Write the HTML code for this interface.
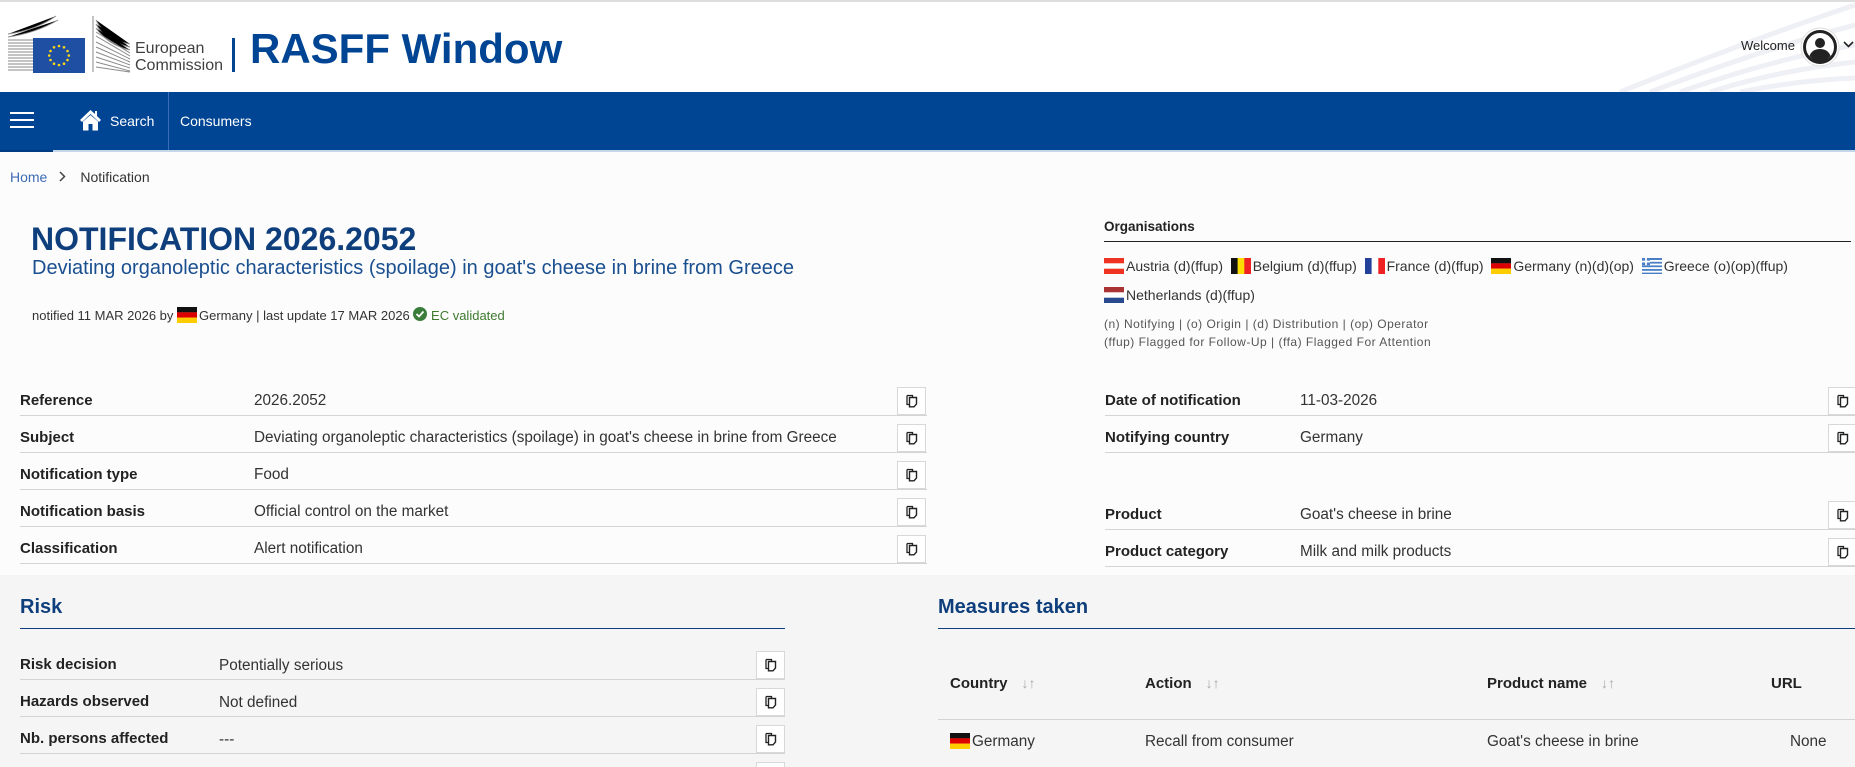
<!DOCTYPE html>
<html><head><meta charset="utf-8">
<style>
*{margin:0;padding:0;box-sizing:border-box}
html{width:1855px;height:767px;overflow:hidden}
body{width:1855px;height:767px;overflow:hidden;background:#fcfcfc;font-family:"Liberation Sans",Arial,sans-serif;color:#333;position:relative}
.a{position:absolute;white-space:nowrap}
.hdr{position:absolute;left:0;top:0;width:1855px;height:92px;background:#fff;border-top:2px solid #ddd}
.nav{position:absolute;left:0;top:92px;width:1855px;height:58px;background:#004494}
.lbl{font-weight:bold;font-size:15px;color:#222}
.val{font-size:15.3px;color:#333}
.line{position:absolute;height:1px;background:#d4d4d4}
.cp{position:absolute;width:29px;height:28px;border:1px solid #d8d8d8;background:#fff}
.cp svg{position:absolute;left:8px;top:6px}
.flag{display:inline-block;width:20px;height:16px;vertical-align:-3px;margin-right:2px}
.org{font-size:14px;color:#333}
.gray{position:absolute;left:0;top:575px;width:1855px;height:192px;background:#f5f5f5}
.th{font-weight:bold;font-size:15px;color:#222}
.sort{color:#aaa;font-size:14px;font-weight:normal;margin-left:14px}
</style></head><body>
<div class="hdr"></div>
<svg class="a" style="left:6px;top:14px" width="230" height="62" viewBox="0 0 230 62">
<g stroke="#8a8a8a" stroke-width="1">
<path d="M2 20 Q30 16 50 2"/><path d="M2 23 Q30 19 52 6"/><path d="M2 26 L28 26"/><path d="M2 29 L28 29"/><path d="M2 32 L28 32"/><path d="M2 35 L28 35"/><path d="M2 38 L28 38"/><path d="M2 41 L28 41"/><path d="M2 44 L28 44"/><path d="M2 47 L28 47"/><path d="M2 50 L28 50"/><path d="M2 53 L28 53"/><path d="M2 56 L28 56"/>
<path d="M87 2 L87 58"/><path d="M90 6 Q100 26 124 30"/><path d="M90 10 Q100 28 124 33"/><path d="M90 14 Q102 31 124 36"/><path d="M90 18 L124 39"/><path d="M90 22 L124 42"/><path d="M90 28 L124 45"/><path d="M90 33 L124 48"/><path d="M90 38 L124 51"/><path d="M90 43 L124 54"/><path d="M90 48 L124 57"/><path d="M90 53 L124 58"/>
</g>
<rect x="27" y="24" width="52" height="35" fill="#1f4fa3"/>
<g fill="#ffd617">
<circle cx="53" cy="32" r="1.3"/><circle cx="58" cy="33.3" r="1.3"/><circle cx="61.5" cy="37" r="1.3"/><circle cx="62.8" cy="41.5" r="1.3"/><circle cx="61.5" cy="46" r="1.3"/><circle cx="58" cy="49.7" r="1.3"/><circle cx="53" cy="51" r="1.3"/><circle cx="48" cy="49.7" r="1.3"/><circle cx="44.5" cy="46" r="1.3"/><circle cx="43.2" cy="41.5" r="1.3"/><circle cx="44.5" cy="37" r="1.3"/><circle cx="48" cy="33.3" r="1.3"/>
</g>
</svg>
<div class="a" style="left:135px;top:40px;font-size:16px;line-height:17px;color:#404040">European<br>Commission</div>
<div class="a" style="left:232px;top:38px;width:3px;height:34px;background:#004494"></div>
<div class="a" style="left:250px;top:24px;font-size:42px;font-weight:bold;color:#004494;line-height:50px">RASFF Window</div>
<svg class="a" style="left:1600px;top:0" width="255" height="92"><g stroke="#eef0f5" stroke-width="5" fill="none"><path d="M20 92 Q150 40 255 5"/><path d="M50 92 Q160 50 255 25"/><path d="M80 92 Q170 60 255 45"/><path d="M110 92 Q180 70 255 62"/><path d="M140 92 Q200 80 255 78"/></g></svg>
<div class="a" style="left:1741px;top:38px;font-size:13px;color:#222">Welcome</div>
<svg class="a" style="left:1800px;top:27px" width="40" height="40" viewBox="0 0 40 40"><circle cx="20" cy="20" r="19" fill="#fff" stroke="#ddd"/><circle cx="20" cy="20" r="15.5" fill="none" stroke="#222" stroke-width="3"/><circle cx="20" cy="16" r="5" fill="#222"/><path d="M9.5 29 Q12 22 20 22 Q28 22 30.5 29 Q26 34.5 20 34.5 Q14 34.5 9.5 29Z" fill="#222"/></svg>
<svg class="a" style="left:1843px;top:41px" width="11" height="8"><path d="M1 1 L5.5 5.5 L10 1" stroke="#222" stroke-width="1.6" fill="none"/></svg>

<div class="nav"></div>
<svg class="a" style="left:10px;top:112px" width="24" height="16"><g stroke="#fff" stroke-width="2"><path d="M0 1H24M0 8H24M0 15H24"/></g></svg>
<svg class="a" style="left:79px;top:109px" width="23" height="22" viewBox="0 0 23 22"><path d="M11.5 1 L1 11 L3 13 L11.5 5 L20 13 L22 11 L18 7 V2 H16 V5Z" fill="#fff"/><path d="M4 12.5 V21.5 H9.5 V15 H13.5 V21.5 H19 V12.5 L11.5 6Z" fill="#fff"/></svg>
<div class="a" style="left:110px;top:113px;font-size:14px;color:#fff">Search</div>
<div class="a" style="left:168px;top:92px;width:1px;height:58px;background:#3a6fb8"></div>
<div class="a" style="left:180px;top:113px;font-size:14px;color:#fff">Consumers</div>
<div class="a" style="left:0;top:150px;width:1855px;height:2px;background:#c5d6ea"></div>
<div class="a" style="left:0;top:150px;width:53px;height:2px;background:#003a80"></div>

<div class="a" style="left:10px;top:169px;font-size:14px"><span style="color:#3d6bb3">Home</span><svg style="margin:0 14px 0 12px;vertical-align:0px" width="7" height="11"><path d="M1 1 L5.5 5.5 L1 10" stroke="#444" stroke-width="1.5" fill="none"/></svg><span style="color:#333">Notification</span></div>

<div class="a" style="left:31px;top:221px;font-size:32px;font-weight:bold;color:#0e3f7c;line-height:36px">NOTIFICATION 2026.2052</div>
<div class="a" style="left:32px;top:256px;font-size:20px;color:#1a4f90;line-height:24px">Deviating organoleptic characteristics (spoilage) in goat's cheese in brine from Greece</div>
<div class="a" style="left:32px;top:307px;font-size:13px;color:#333">notified 11 MAR 2026 by <svg class="flag" viewBox="0 0 20 16"><rect width="20" height="5.4" fill="#111"/><rect y="5.3" width="20" height="5.4" fill="#d00"/><rect y="10.6" width="20" height="5.4" fill="#fc0"/></svg>Germany | last update 17 MAR 2026 <svg style="vertical-align:-1px" width="14" height="14"><circle cx="7" cy="7" r="7" fill="#3a7c3a"/><path d="M3.5 7 L6 9.5 L10.5 4.5" stroke="#fff" stroke-width="1.8" fill="none"/></svg> <span style="color:#3d7a2f">EC validated</span></div>

<div class="a" style="left:1104px;top:219px;font-size:13.5px;font-weight:bold;color:#222">Organisations</div>
<div class="a" style="left:1104px;top:241px;width:747px;height:1px;background:#222"></div>
<div class="a org" style="left:1104px;top:258px">
<svg class="flag" viewBox="0 0 20 16"><rect width="20" height="16" fill="#e32"/><rect y="5.3" width="20" height="5.4" fill="#fff"/></svg>Austria (d)(ffup)&nbsp;
<svg class="flag" viewBox="0 0 20 16"><rect width="7" height="16" fill="#111"/><rect x="6.6" width="7" height="16" fill="#fd0"/><rect x="13.3" width="6.7" height="16" fill="#e22"/></svg>Belgium (d)(ffup)&nbsp;
<svg class="flag" viewBox="0 0 20 16"><rect width="7" height="16" fill="#23409a"/><rect x="6.6" width="7" height="16" fill="#fff"/><rect x="13.3" width="6.7" height="16" fill="#e22"/></svg>France (d)(ffup)&nbsp;
<svg class="flag" viewBox="0 0 20 16"><rect width="20" height="5.4" fill="#111"/><rect y="5.3" width="20" height="5.4" fill="#d00"/><rect y="10.6" width="20" height="5.4" fill="#fc0"/></svg>Germany (n)(d)(op)&nbsp;
<svg class="flag" viewBox="0 0 20 16"><rect width="20" height="16" fill="#4a7fc8"/><g fill="#fff"><rect y="2" width="20" height="1.8"/><rect y="5.6" width="20" height="1.8"/><rect y="9.2" width="20" height="1.8"/><rect y="12.8" width="20" height="1.8"/></g><rect width="8" height="7.2" fill="#4a7fc8"/><rect x="3.1" width="1.8" height="7.2" fill="#fff"/><rect y="2.7" width="8" height="1.8" fill="#fff"/></svg>Greece (o)(op)(ffup)
</div>
<div class="a org" style="left:1104px;top:287px"><svg class="flag" viewBox="0 0 20 16"><rect width="20" height="16" fill="#fff"/><rect width="20" height="5.3" fill="#a33"/><rect y="10.7" width="20" height="5.3" fill="#2a4a90"/></svg>Netherlands (d)(ffup)</div>
<div class="a" style="left:1104px;top:315px;font-size:12px;color:#555;line-height:18px;letter-spacing:0.5px">(n) Notifying | (o) Origin | (d) Distribution | (op) Operator<br>(ffup) Flagged for Follow-Up | (ffa) Flagged For Attention</div>

<div class="a lbl" style="left:20px;top:392px">Reference</div><div class="a val" style="left:254px;top:392px">2026.2052</div>
<div class="a lbl" style="left:20px;top:429px">Subject</div><div class="a val" style="left:254px;top:429px">Deviating organoleptic characteristics (spoilage) in goat's cheese in brine from Greece</div>
<div class="a lbl" style="left:20px;top:466px">Notification type</div><div class="a val" style="left:254px;top:466px">Food</div>
<div class="a lbl" style="left:20px;top:503px">Notification basis</div><div class="a val" style="left:254px;top:503px">Official control on the market</div>
<div class="a lbl" style="left:20px;top:540px">Classification</div><div class="a val" style="left:254px;top:540px">Alert notification</div>
<div class="line" style="left:20px;top:415px;width:907px"></div>
<div class="line" style="left:20px;top:452px;width:907px"></div>
<div class="line" style="left:20px;top:489px;width:907px"></div>
<div class="line" style="left:20px;top:526px;width:907px"></div>
<div class="line" style="left:20px;top:563px;width:907px"></div>

<div class="a lbl" style="left:1105px;top:392px">Date of notification</div><div class="a val" style="left:1300px;top:392px">11-03-2026</div>
<div class="a lbl" style="left:1105px;top:429px">Notifying country</div><div class="a val" style="left:1300px;top:429px">Germany</div>
<div class="a lbl" style="left:1105px;top:506px">Product</div><div class="a val" style="left:1300px;top:506px">Goat's cheese in brine</div>
<div class="a lbl" style="left:1105px;top:543px">Product category</div><div class="a val" style="left:1300px;top:543px">Milk and milk products</div>
<div class="line" style="left:1105px;top:415px;width:750px"></div>
<div class="line" style="left:1105px;top:452px;width:750px"></div>
<div class="line" style="left:1105px;top:529px;width:750px"></div>
<div class="line" style="left:1105px;top:566px;width:750px"></div>

<div class="gray"></div>
<div class="a" style="left:20px;top:596px;font-size:20px;font-weight:bold;color:#0e3f7c">Risk</div>
<div class="a" style="left:20px;top:628px;width:765px;height:1px;background:#0e3f7c"></div>
<div class="a lbl" style="left:20px;top:656px">Risk decision</div><div class="a val" style="left:219px;top:657px">Potentially serious</div>
<div class="a lbl" style="left:20px;top:693px">Hazards observed</div><div class="a val" style="left:219px;top:694px">Not defined</div>
<div class="a lbl" style="left:20px;top:730px">Nb. persons affected</div><div class="a val" style="left:219px;top:731px">---</div>
<div class="line" style="left:20px;top:679px;width:765px"></div>
<div class="line" style="left:20px;top:716px;width:765px"></div>
<div class="line" style="left:20px;top:753px;width:765px"></div>

<div class="a" style="left:938px;top:596px;font-size:20px;font-weight:bold;color:#0e3f7c">Measures taken</div>
<div class="a" style="left:938px;top:628px;width:917px;height:1px;background:#0e3f7c"></div>
<div class="a th" style="left:950px;top:675px">Country<span class="sort">&#8595;&#8593;</span></div>
<div class="a th" style="left:1145px;top:675px">Action<span class="sort">&#8595;&#8593;</span></div>
<div class="a th" style="left:1487px;top:675px">Product name<span class="sort">&#8595;&#8593;</span></div>
<div class="a th" style="left:1771px;top:675px">URL</div>
<div class="line" style="left:938px;top:719px;width:917px"></div>
<div class="a val" style="left:950px;top:733px"><svg class="flag" viewBox="0 0 20 16"><rect width="20" height="5.4" fill="#111"/><rect y="5.3" width="20" height="5.4" fill="#d00"/><rect y="10.6" width="20" height="5.4" fill="#fc0"/></svg>Germany</div>
<div class="a val" style="left:1145px;top:733px">Recall from consumer</div>
<div class="a val" style="left:1487px;top:733px">Goat's cheese in brine</div>
<div class="a val" style="left:1790px;top:733px">None</div>

<div class="cp" style="left:897px;top:387px"><svg width="12" height="14" viewBox="0 0 12 14"><path d="M1 1.5H6.5V3M1 1.5V10.5H3" stroke="#222" stroke-width="1.3" fill="none"/><path d="M3.5 3.5H10.5V10L8 12.8H3.5Z" stroke="#222" stroke-width="1.4" fill="none"/></svg></div>
<div class="cp" style="left:897px;top:424px"><svg width="12" height="14" viewBox="0 0 12 14"><path d="M1 1.5H6.5V3M1 1.5V10.5H3" stroke="#222" stroke-width="1.3" fill="none"/><path d="M3.5 3.5H10.5V10L8 12.8H3.5Z" stroke="#222" stroke-width="1.4" fill="none"/></svg></div>
<div class="cp" style="left:897px;top:461px"><svg width="12" height="14" viewBox="0 0 12 14"><path d="M1 1.5H6.5V3M1 1.5V10.5H3" stroke="#222" stroke-width="1.3" fill="none"/><path d="M3.5 3.5H10.5V10L8 12.8H3.5Z" stroke="#222" stroke-width="1.4" fill="none"/></svg></div>
<div class="cp" style="left:897px;top:498px"><svg width="12" height="14" viewBox="0 0 12 14"><path d="M1 1.5H6.5V3M1 1.5V10.5H3" stroke="#222" stroke-width="1.3" fill="none"/><path d="M3.5 3.5H10.5V10L8 12.8H3.5Z" stroke="#222" stroke-width="1.4" fill="none"/></svg></div>
<div class="cp" style="left:897px;top:535px"><svg width="12" height="14" viewBox="0 0 12 14"><path d="M1 1.5H6.5V3M1 1.5V10.5H3" stroke="#222" stroke-width="1.3" fill="none"/><path d="M3.5 3.5H10.5V10L8 12.8H3.5Z" stroke="#222" stroke-width="1.4" fill="none"/></svg></div>
<div class="cp" style="left:1828px;top:387px"><svg width="12" height="14" viewBox="0 0 12 14"><path d="M1 1.5H6.5V3M1 1.5V10.5H3" stroke="#222" stroke-width="1.3" fill="none"/><path d="M3.5 3.5H10.5V10L8 12.8H3.5Z" stroke="#222" stroke-width="1.4" fill="none"/></svg></div>
<div class="cp" style="left:1828px;top:424px"><svg width="12" height="14" viewBox="0 0 12 14"><path d="M1 1.5H6.5V3M1 1.5V10.5H3" stroke="#222" stroke-width="1.3" fill="none"/><path d="M3.5 3.5H10.5V10L8 12.8H3.5Z" stroke="#222" stroke-width="1.4" fill="none"/></svg></div>
<div class="cp" style="left:1828px;top:501px"><svg width="12" height="14" viewBox="0 0 12 14"><path d="M1 1.5H6.5V3M1 1.5V10.5H3" stroke="#222" stroke-width="1.3" fill="none"/><path d="M3.5 3.5H10.5V10L8 12.8H3.5Z" stroke="#222" stroke-width="1.4" fill="none"/></svg></div>
<div class="cp" style="left:1828px;top:538px"><svg width="12" height="14" viewBox="0 0 12 14"><path d="M1 1.5H6.5V3M1 1.5V10.5H3" stroke="#222" stroke-width="1.3" fill="none"/><path d="M3.5 3.5H10.5V10L8 12.8H3.5Z" stroke="#222" stroke-width="1.4" fill="none"/></svg></div>
<div class="cp" style="left:756px;top:651px"><svg width="12" height="14" viewBox="0 0 12 14"><path d="M1 1.5H6.5V3M1 1.5V10.5H3" stroke="#222" stroke-width="1.3" fill="none"/><path d="M3.5 3.5H10.5V10L8 12.8H3.5Z" stroke="#222" stroke-width="1.4" fill="none"/></svg></div>
<div class="cp" style="left:756px;top:688px"><svg width="12" height="14" viewBox="0 0 12 14"><path d="M1 1.5H6.5V3M1 1.5V10.5H3" stroke="#222" stroke-width="1.3" fill="none"/><path d="M3.5 3.5H10.5V10L8 12.8H3.5Z" stroke="#222" stroke-width="1.4" fill="none"/></svg></div>
<div class="cp" style="left:756px;top:725px"><svg width="12" height="14" viewBox="0 0 12 14"><path d="M1 1.5H6.5V3M1 1.5V10.5H3" stroke="#222" stroke-width="1.3" fill="none"/><path d="M3.5 3.5H10.5V10L8 12.8H3.5Z" stroke="#222" stroke-width="1.4" fill="none"/></svg></div>
<div class="cp" style="left:756px;top:762px;height:5px;border-bottom:none"></div>
</body></html>
